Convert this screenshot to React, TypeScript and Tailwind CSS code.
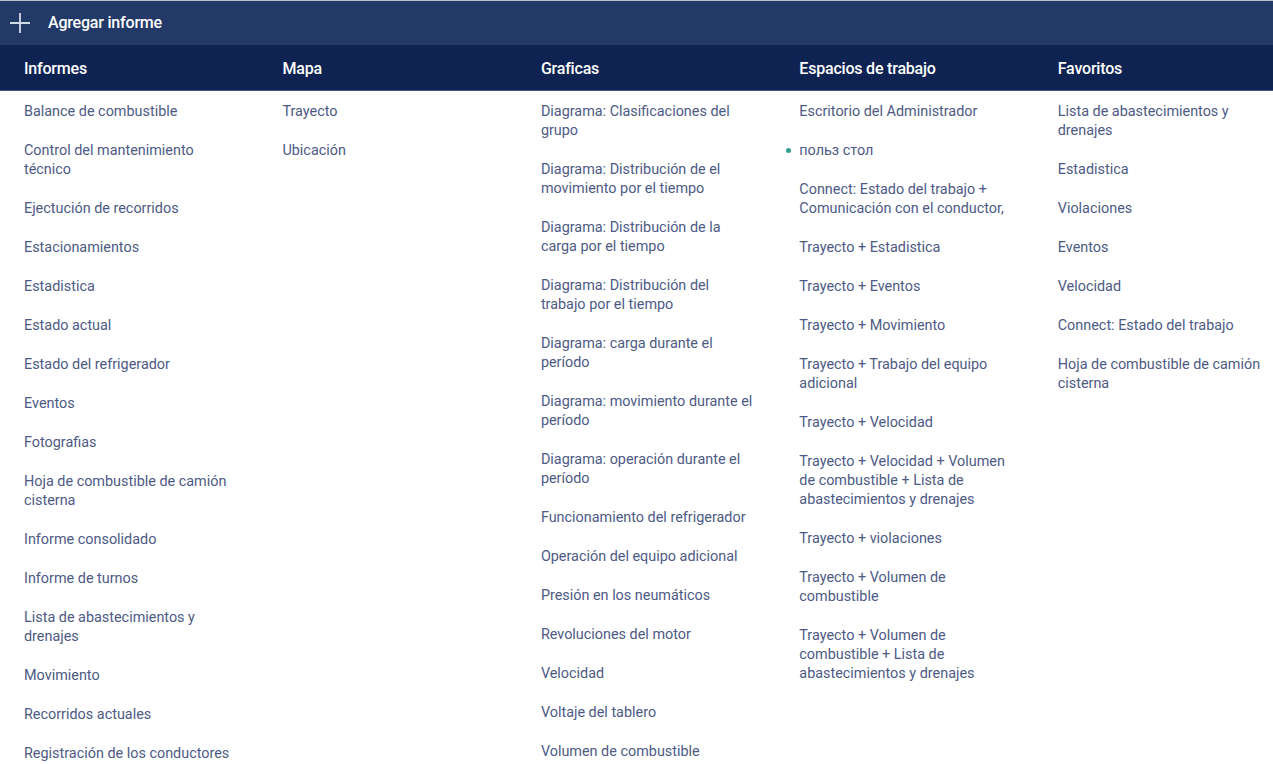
import React from 'react';

type Column = {
    title: string;
    items: { label: string; active?: boolean }[];
};

const columns: Column[] = [
    {
        title: 'Informes',
        items: [
            'Balance de combustible',
            'Control del mantenimiento técnico',
            'Ejectución de recorridos',
            'Estacionamientos',
            'Estadistica',
            'Estado actual',
            'Estado del refrigerador',
            'Eventos',
            'Fotografias',
            'Hoja de combustible de camión cisterna',
            'Informe consolidado',
            'Informe de turnos',
            'Lista de abastecimientos y drenajes',
            'Movimiento',
            'Recorridos actuales',
            'Registración de los conductores',
        ].map((label) => ({ label })),
    },
    {
        title: 'Mapa',
        items: ['Trayecto', 'Ubicación'].map((label) => ({ label })),
    },
    {
        title: 'Graficas',
        items: [
            'Diagrama: Clasificaciones del grupo',
            'Diagrama: Distribución de el movimiento por el tiempo',
            'Diagrama: Distribución de la carga por el tiempo',
            'Diagrama: Distribución del trabajo por el tiempo',
            'Diagrama: carga durante el período',
            'Diagrama: movimiento durante el período',
            'Diagrama: operación durante el período',
            'Funcionamiento del refrigerador',
            'Operación del equipo adicional',
            'Presión en los neumáticos',
            'Revoluciones del motor',
            'Velocidad',
            'Voltaje del tablero',
            'Volumen de combustible',
        ].map((label) => ({ label })),
    },
    {
        title: 'Espacios de trabajo',
        items: [
            { label: 'Escritorio del Administrador' },
            { label: 'польз стол', active: true },
            // the long name keeps its second line whole
            { label: 'Connect: Estado del trabajo + Comunicación\u00a0con\u00a0el\u00a0conductor,' },
            { label: 'Trayecto + Estadistica' },
            { label: 'Trayecto + Eventos' },
            { label: 'Trayecto + Movimiento' },
            { label: 'Trayecto + Trabajo del equipo adicional' },
            { label: 'Trayecto + Velocidad' },
            { label: 'Trayecto + Velocidad + Volumen de combustible + Lista de abastecimientos y drenajes' },
            { label: 'Trayecto + violaciones' },
            { label: 'Trayecto + Volumen de combustible' },
            { label: 'Trayecto + Volumen de combustible + Lista de abastecimientos y drenajes' },
        ],
    },
    {
        title: 'Favoritos',
        items: [
            'Lista de abastecimientos y drenajes',
            'Estadistica',
            'Violaciones',
            'Eventos',
            'Velocidad',
            'Connect: Estado del trabajo',
            'Hoja de combustible de camión cisterna',
        ].map((label) => ({ label })),
    },
];

const App: React.FC = () => {
    return (
        <div className="w-[1273px] h-[764px] overflow-hidden bg-white font-['Roboto',sans-serif]">
            {/* === Top bar === */}
            <div className="h-[45px] bg-[#233a68] border-t border-[#b9bec8] flex items-center">
                <svg width="20" height="20" viewBox="0 0 20 20" className="ml-[10px]">
                    <path d="M10 0V20M0 10H20" stroke="#d3dae8" strokeWidth="1.8" />
                </svg>
                <span className="ml-[18px] text-white text-[16px] font-medium tracking-[-0.2px]">Agregar informe</span>
            </div>

            {/* === Column headers === */}
            <div className="h-[46px] pt-[3px] bg-[#0e2352] border-b border-[#3d5282] flex">
                {columns.map((col) => (
                    <div key={col.title} className="w-[258.45px] shrink-0 pl-[24px] flex items-center">
                        <span className="text-white text-[16px] font-medium tracking-[-0.2px]">{col.title}</span>
                    </div>
                ))}
            </div>

            {/* === Lists === */}
            <div className="flex pt-[1px]">
                {columns.map((col) => (
                    <ul key={col.title} className="w-[258.45px] shrink-0 pl-[24px] pr-[21px]">
                        {col.items.map((item) => (
                            <li
                                key={item.label}
                                className="relative py-[10px] text-[14.4px] leading-[19px] text-[#4d5a85]"
                            >
                                {item.active && (
                                    <span className="absolute left-[-13px] top-[17px] w-[5px] h-[5px] rounded-full bg-[#2fa08e]" />
                                )}
                                {item.label}
                            </li>
                        ))}
                    </ul>
                ))}
            </div>
        </div>
    );
};

export default App;
